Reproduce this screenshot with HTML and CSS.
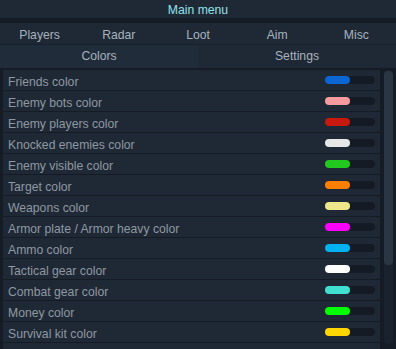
FILE: index.html
```html
<!DOCTYPE html>
<html>
<head>
<meta charset="utf-8">
<link rel="stylesheet" href="styles.css">
</head>
<body>
<div class="app">
  <div class="header">Main menu</div>
  <div class="tabs">
    <div class="tab">Players</div>
    <div class="tab">Radar</div>
    <div class="tab">Loot</div>
    <div class="tab">Aim</div>
    <div class="tab">Misc</div>
  </div>
  <div class="subtabs">
    <div class="subtab active">Colors</div>
    <div class="subtab">Settings</div>
  </div>
  <div class="panel">
    <div class="list">
      <div class="row"><span class="label">Friends color</span><span class="pill"><span class="fill" style="background:#0a66d2"></span></span></div>
      <div class="row"><span class="label">Enemy bots color</span><span class="pill"><span class="fill" style="background:#f59b9f"></span></span></div>
      <div class="row"><span class="label">Enemy players color</span><span class="pill"><span class="fill" style="background:#c8190f"></span></span></div>
      <div class="row"><span class="label">Knocked enemies color</span><span class="pill"><span class="fill" style="background:#e6e6e6"></span></span></div>
      <div class="row"><span class="label">Enemy visible color</span><span class="pill"><span class="fill" style="background:#22c81e"></span></span></div>
      <div class="row"><span class="label">Target color</span><span class="pill"><span class="fill" style="background:#ff7f00"></span></span></div>
      <div class="row"><span class="label">Weapons color</span><span class="pill"><span class="fill" style="background:#f0e68c"></span></span></div>
      <div class="row"><span class="label">Armor plate / Armor heavy color</span><span class="pill"><span class="fill" style="background:#ff00ff"></span></span></div>
      <div class="row"><span class="label">Ammo color</span><span class="pill"><span class="fill" style="background:#00b2f0"></span></span></div>
      <div class="row"><span class="label">Tactical gear color</span><span class="pill"><span class="fill" style="background:#ffffff"></span></span></div>
      <div class="row"><span class="label">Combat gear color</span><span class="pill"><span class="fill" style="background:#40e0d0"></span></span></div>
      <div class="row"><span class="label">Money color</span><span class="pill"><span class="fill" style="background:#00ff00"></span></span></div>
      <div class="row"><span class="label">Survival kit color</span><span class="pill"><span class="fill" style="background:#ffd700"></span></span></div>
      <div class="row"><span class="label"></span></div>
    </div>
    <div class="scrollbar"><div class="thumb"></div></div>
  </div>
</div>
</body>
</html>
```

FILE: styles.css
```css
html, body {
  margin: 0;
  padding: 0;
  background: #151c26;
  font-family: "Liberation Sans", Arial, sans-serif;
  font-size: 12.2px;
}
.app {
  width: 396px;
  height: 349px;
  overflow: hidden;
  display: flex;
  flex-direction: column;
}
.header {
  height: 18px;
  line-height: 21px;
  background: #1f2936;
  color: #93e0e8;
  text-align: center;
}
.tabs {
  margin-top: 5px;
  display: grid;
  grid-template-columns: repeat(5, 1fr);
  height: 21px;
  background: #1f2936;
  border-bottom: 1px solid #18202b;
}
.tab, .subtab {
  color: #a6b2be;
  text-align: center;
  line-height: 24px;
}
.subtabs {
  display: grid;
  grid-template-columns: 1fr 1fr;
  height: 20px;
}
.subtab {
  background: #1f2936;
  line-height: 23px;
}
.subtab.active {
  background: #212c3a;
}
.panel {
  margin-top: 5px;
  display: flex;
  padding-left: 3px;
  flex: 1;
  min-height: 0;
}
.list {
  width: 377px;
  display: flex;
  flex-direction: column;
}
.row {
  flex: none;
  height: 20px;
  border-bottom: 1px solid #151c26;
  background: #1f2936;
  display: flex;
  align-items: center;
  justify-content: space-between;
  padding: 0 5px 0 5px;
}
.label {
  color: #8f98a1;
  line-height: 20px;
  padding-top: 3px;
}
.pill {
  width: 50px;
  height: 8px;
  border-radius: 4px;
  background: #141b25;
  display: flex;
}
.fill {
  width: 25px;
  height: 8px;
  border-radius: 4px;
}
.scrollbar {
  margin-left: 4px;
  width: 9px;
  height: 273px;
  background: #1a222e;
  border-radius: 4px;
  padding-top: 1px;
}
.thumb {
  height: 194px;
  background: #2b3645;
  border-radius: 4px;
}
```
